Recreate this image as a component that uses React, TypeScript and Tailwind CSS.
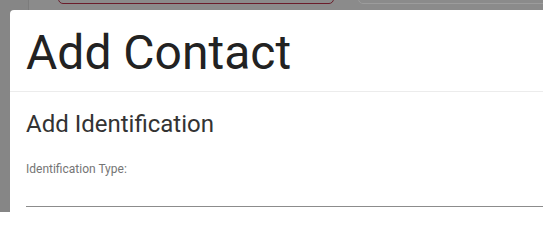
export default function App() {
  return (
    <div className="relative h-[212px] w-[543px] overflow-hidden bg-[#8b8b8b] font-['Roboto',sans-serif]">
      {/* page behind the backdrop */}
      <div className="absolute left-0 top-0 h-full w-[29px] border-r border-[#7c7c7c] bg-[#868686]" />
      <div className="absolute left-[58px] top-[-30px] h-[34px] w-[276px] rounded-[5px] border border-[#6b1d2b]" />
      <div className="absolute left-[358px] top-[-30px] h-[34px] w-[220px] rounded-[5px] border border-[#9c9c9c]" />

      {/* modal */}
      <div className="absolute left-[10px] top-[10px] right-[-20px] bottom-[-60px] flex flex-col rounded-tl-[4px] bg-white">
        <div className="border-b border-[#ececec] px-4 pt-[15px] pb-[10px]">
          <h1 className="text-[48px] leading-[56px] font-normal text-[#222]">Add Contact</h1>
        </div>
        <div className="flex flex-col px-4 pt-[18px]">
          <h2 className="text-[24px] leading-[28px] font-normal text-[#333]">Add Identification</h2>
          <label className="mt-[23px] block text-[12px] leading-[16px] font-normal text-[#757575]">
            Identification Type:
          </label>
          <div className="h-[30px] border-b border-[#8c8c8c]" />
        </div>
      </div>
    </div>
  );
}
